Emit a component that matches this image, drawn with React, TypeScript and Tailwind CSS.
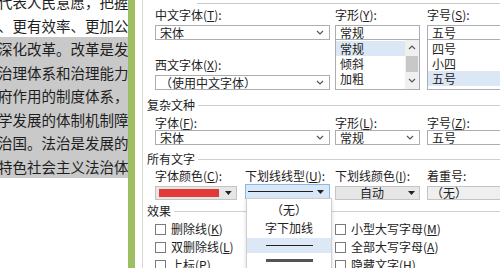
import React from "react";

const font = "font-['Noto_Sans_CJK_SC','Noto_Sans',sans-serif]";

const docLines = [
  { t: "代表人民意愿，把握发展规律", sel: false },
  { t: "、更有效率、更加公平", sel: false },
  { t: "深化改革。改革是发展的", sel: true },
  { t: "治理体系和治理能力现代", sel: true },
  { t: "府作用的制度体系，以", sel: true },
  { t: "学发展的体制机制障碍", sel: true },
  { t: "治国。法治是发展的可", sel: true },
  { t: "特色社会主义法治体系", sel: true },
];

function Key({ k }: { k: string }) {
  return (
    <>
      (<span className="underline underline-offset-1">{k}</span>)
    </>
  );
}

function Chevron() {
  return (
    <svg width="8" height="5" viewBox="0 0 8 5">
      <path d="M1 1l3 3 3-3" fill="none" stroke="#555" strokeWidth="1.2" />
    </svg>
  );
}

function Tri() {
  return (
    <svg width="7" height="4" viewBox="0 0 7 4">
      <path d="M0 0h7L3.5 4z" fill="#222" />
    </svg>
  );
}

function Label({ children, h = "h-[21px]" }: { children: React.ReactNode; h?: string }) {
  return <div className={`${h} flex items-center text-[12px] leading-none text-[#222] whitespace-nowrap`}>{children}</div>;
}

function Box({ text, chevron }: { text: string; chevron?: boolean }) {
  return (
    <div className="h-[15px] border border-[#abadb3] bg-white flex items-center justify-between pl-[4px] pr-[5px] text-[12px] leading-none text-[#222] whitespace-nowrap">
      <span>{text}</span>
      {chevron && <Chevron />}
    </div>
  );
}

function Section({ title, mt = "mt-[5px]", h = "h-[20px]" }: { title: string; mt?: string; h?: string }) {
  return (
    <div className={`${mt} ${h} flex items-center pl-[4px] text-[12px] leading-none text-[#222]`}>
      <span>{title}</span>
      <div className="flex-1 ml-[3px] mt-[1px] border-t border-[#cfcfcf]" />
    </div>
  );
}

function Check({ label }: { label: React.ReactNode }) {
  return (
    <div className="h-[18px] flex items-center gap-[5px] text-[12px] leading-none text-[#222] whitespace-nowrap">
      <div className="w-[11px] h-[11px] border border-[#7a7a7a] bg-white" />
      <span>{label}</span>
    </div>
  );
}

export default function App() {
  return (
    <div className={`w-[500px] h-[268px] overflow-hidden flex bg-white ${font}`}>
      {/* document */}
      <div className="w-[128px] shrink-0 overflow-hidden">
        <div className="-mt-[10px]">
          {docLines.map((l, i) => (
            <div
              key={i}
              className={`h-[23.5px] leading-[23.5px] text-[14.5px] text-[#1e1e1e] whitespace-nowrap -ml-[2px] pl-0 ${l.sel ? "bg-[#c9c9c9]" : ""}`}
            >
              {l.t}
            </div>
          ))}
        </div>
      </div>
      <div className="w-[7px] shrink-0 bg-[#9dbf62]" />
      <div className="w-[7px] shrink-0 bg-white" />

      {/* font dialog */}
      <div className="relative flex-1 border-l border-[#d6d6d6] overflow-hidden">
        <div className="h-[4px] flex">
          <div className="w-[54px]" />
          <div className="flex-1 border-b border-[#c8c8c8]" />
        </div>

        <div className="pl-[12px] flex">
          <div className="w-[175px] shrink-0 flex flex-col">
            <Label>
              中文字体<Key k="T" />:
            </Label>
            <Box text="宋体" chevron />
            <div className="h-[14px]" />
            <Label>
              西文字体<Key k="X" />:
            </Label>
            <Box text="（使用中文字体）" chevron />
          </div>
          <div className="ml-[5px] w-[85px] shrink-0 flex flex-col">
            <Label>
              字形<Key k="Y" />:
            </Label>
            <Box text="常规" />
            <div className="h-[50px] border border-t-0 border-[#abadb3] flex text-[12px] leading-none text-[#222]">
              <div className="flex-1 pt-[1px]">
                <div className="h-[15px] flex items-center pl-[4px] bg-[#dce7f5]">常规</div>
                <div className="h-[15px] flex items-center pl-[4px]">倾斜</div>
                <div className="h-[15px] flex items-center pl-[4px]">加粗</div>
              </div>
              <div className="w-[14px] flex flex-col items-center bg-[#f0f0f0]">
                <div className="h-[16px] flex items-center rotate-180">
                  <Chevron />
                </div>
                <div className="w-[12px] h-[16px] bg-[#c8c8c8]" />
                <div className="flex-1 flex items-center">
                  <Chevron />
                </div>
              </div>
            </div>
          </div>
          <div className="ml-[7px] w-[90px] shrink-0 flex flex-col">
            <Label>
              字号<Key k="S" />:
            </Label>
            <Box text="五号" />
            <div className="h-[50px] border border-t-0 border-[#abadb3] pt-[1px] text-[12px] leading-none text-[#222]">
              <div className="h-[15px] flex items-center pl-[4px]">四号</div>
              <div className="h-[15px] flex items-center pl-[4px]">小四</div>
              <div className="h-[15px] flex items-center pl-[4px] bg-[#dce7f5]">五号</div>
            </div>
          </div>
        </div>

        <Section title="复杂文种" />
        <div className="pl-[12px] flex">
          <div className="w-[175px] shrink-0">
            <Label h="h-[15px]">
              字体<Key k="F" />:
            </Label>
            <Box text="宋体" chevron />
          </div>
          <div className="ml-[5px] w-[85px] shrink-0">
            <Label h="h-[15px]">
              字形<Key k="L" />:
            </Label>
            <Box text="常规" chevron />
          </div>
          <div className="ml-[7px] w-[90px] shrink-0">
            <Label h="h-[15px]">
              字号<Key k="Z" />:
            </Label>
            <Box text="五号" />
          </div>
        </div>

        <Section title="所有文字" h="h-[18px]" />
        <div className="pl-[12px] flex">
          <div className="w-[82px] shrink-0">
            <Label h="h-[15px]">
              字体颜色<Key k="C" />:
            </Label>
            <div className="mt-[3px] h-[14px] border border-[#c4c4c4] bg-[#e6e6e6] flex items-center pl-[3px] pr-[4px] gap-[6px]">
              <div className="w-[63px] h-[8px] bg-[#e23a36]" />
              <Tri />
            </div>
          </div>
          <div className="ml-[8px] w-[85px] shrink-0">
            <Label h="h-[15px]">
              下划线线型<Key k="U" />:
            </Label>
            <div className="mt-[1px] h-[15px] border border-[#8cb8e6] bg-[#d8e8f8] flex items-center pl-[2px] pr-[5px] gap-[4px]">
              <div className="flex-1 border-t border-[#222]" />
              <Tri />
            </div>
          </div>
          <div className="ml-[5px] w-[85px] shrink-0">
            <Label h="h-[15px]">
              下划线颜色<Key k="I" />:
            </Label>
            <div className="mt-[3px] h-[14px] border border-[#c4c4c4] bg-[#e6e6e6] flex items-center pr-[4px] text-[12px] leading-none text-[#222]">
              <span className="flex-1 text-center">自动</span>
              <Tri />
            </div>
          </div>
          <div className="ml-[7px] w-[90px] shrink-0">
            <Label h="h-[15px]">着重号:</Label>
            <div className="mt-[3px] h-[14px] border border-[#c4c4c4] bg-[#efefef] flex items-center pl-[3px] text-[12px] leading-none text-[#222]">
              （无）
            </div>
          </div>
        </div>

        <Section title="效果" mt="mt-[2px]" h="h-[18px]" />
        <div className="pl-[12px] flex">
          <div className="w-[180px] shrink-0">
            <Check label={<>删除线<Key k="K" /></>} />
            <Check label={<>双删除线<Key k="L" /></>} />
            <Check label={<>上标<Key k="P" /></>} />
          </div>
          <div>
            <Check label={<>小型大写字母<Key k="M" /></>} />
            <Check label={<>全部大写字母<Key k="A" /></>} />
            <Check label={<>隐藏文字<Key k="H" /></>} />
          </div>
        </div>

        {/* underline style drop-down list */}
        <div className="absolute left-[103px] top-[198px] w-[86px] h-[80px] bg-white border border-[#cfcfcf] shadow-[0_2px_4px_rgba(0,0,0,0.15)] pt-[3px] text-[12px] leading-none text-[#222]">
          <div className="h-[16px] flex items-center justify-center">（无）</div>
          <div className="h-[20px] flex items-center justify-center">字下加线</div>
          <div className="h-[15px] flex items-center justify-center bg-[#dce8f6]">
            <div className="w-[47px] border-t border-[#222]" />
          </div>
          <div className="h-[14px] flex items-center justify-center">
            <div className="w-[47px] h-[3px] bg-[#555]" />
          </div>
        </div>
      </div>
    </div>
  );
}
